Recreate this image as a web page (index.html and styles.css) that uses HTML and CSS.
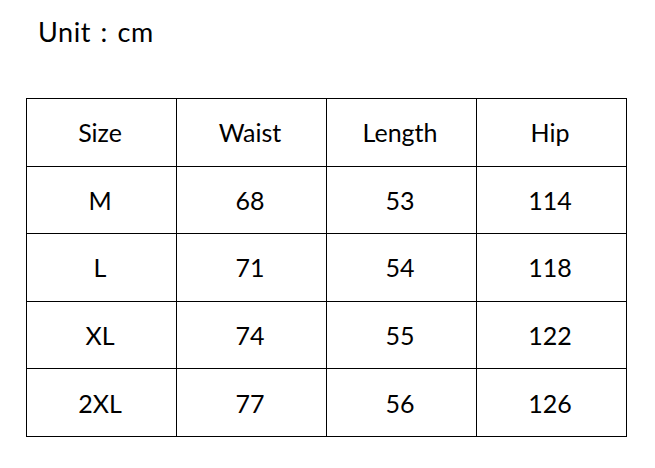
FILE: index.html
```html
<!DOCTYPE html>
<html>
<head>
<meta charset="utf-8">
<link rel="stylesheet" href="styles.css">
</head>
<body>
<div class="page">
  <div class="unit">Unit : cm</div>
  <table class="size-table">
    <tr><td>Size</td><td>Waist</td><td>Length</td><td>Hip</td></tr>
    <tr><td>M</td><td>68</td><td>53</td><td>114</td></tr>
    <tr><td>L</td><td>71</td><td>54</td><td>118</td></tr>
    <tr><td>XL</td><td>74</td><td>55</td><td>122</td></tr>
    <tr><td>2XL</td><td>77</td><td>56</td><td>126</td></tr>
  </table>
</div>
</body>
</html>
```
FILE: styles.css
```css
html, body {
  margin: 0;
  padding: 0;
  background: #fff;
}
.page {
  width: 655px;
  height: 468px;
  padding: 14px 0 0 26px;
  box-sizing: border-box;
  font-family: Lato, "Open Sans", sans-serif;
  color: #000;
}
.unit {
  font-size: 27px;
  line-height: 36px;
  padding-left: 12px;
  margin-bottom: 48px;
  word-spacing: 2px;
  letter-spacing: 0.6px;
}
.size-table {
  border-collapse: collapse;
  width: 601px;
  table-layout: fixed;
}
.size-table td {
  border: 1px solid #000;
  height: 66.6px;
  padding: 0 3px 0 0;
  text-align: center;
  vertical-align: middle;
  font-size: 25px;
}
```
